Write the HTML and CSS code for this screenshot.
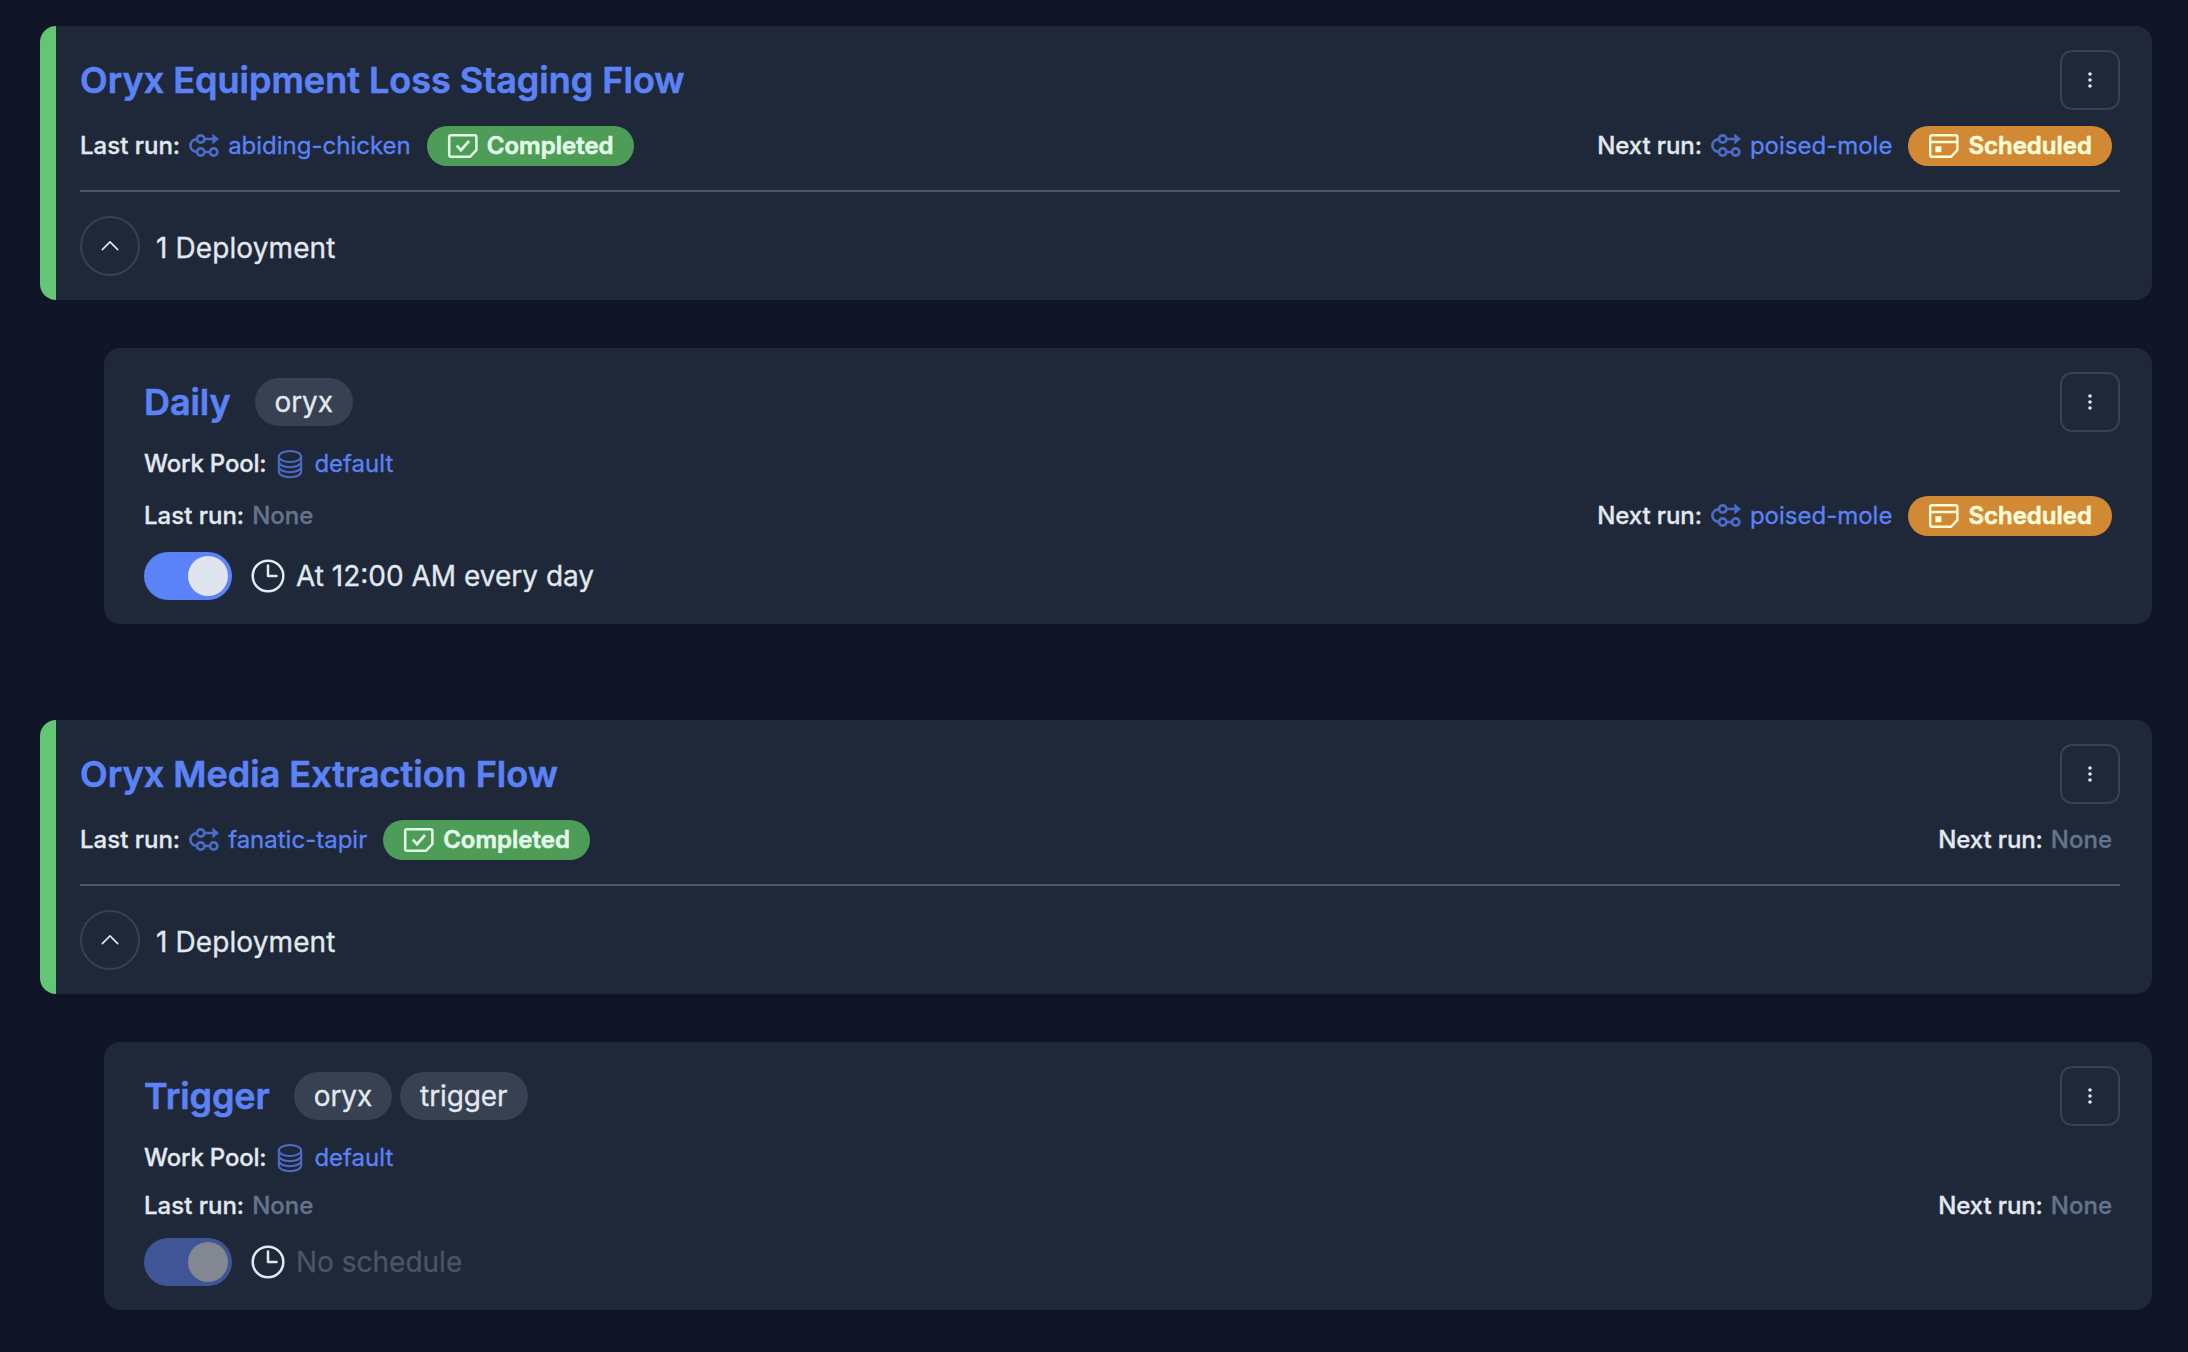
FILE: index.html
```html
<!DOCTYPE html>
<html lang="en">
<head>
<meta charset="utf-8">
<title>Deployments</title>
<link rel="stylesheet" href="styles.css">
</head>
<body>
<svg class="sprite" aria-hidden="true">
  <symbol id="flow-run" viewBox="0 0 32 32">
    <g fill="none" stroke="currentColor" stroke-width="2.7">
      <circle cx="12.7" cy="9" r="3.7"/><circle cx="12.7" cy="22" r="3.7"/><circle cx="25.7" cy="22" r="3.7"/>
      <path d="M9 9.2C0.2 9.8 0.2 21.4 9 22M16.400 9H26M16.400 22H22"/>
    </g>
    <path d="M24.400 3.400L31 9l-6.600 5.600z" fill="currentColor"/>
  </symbol>
  <symbol id="check" viewBox="0 0 32 32">
    <path d="M4 5.200H27.600Q29.400 5.200 29.400 7V20L23 26.800H4Q2.200 26.800 2.200 25V7Q2.200 5.200 4 5.200Z" fill="none" stroke="currentColor" stroke-width="2.500"/>
    <path d="M9.800 15.700L14 20.200L22 11" fill="none" stroke="currentColor" stroke-width="2.700"/>
  </symbol>
  <symbol id="calendar" viewBox="0 0 32 32">
    <path d="M4 5.200H27.600Q29.400 5.200 29.400 7V20L23 26.800H4Q2.200 26.800 2.200 25V7Q2.200 5.200 4 5.200ZM2.200 12H29.400" fill="none" stroke="currentColor" stroke-width="2.400"/>
    <path d="M7.400 16.200h6v6h-6z" fill="currentColor"/>
  </symbol>
  <symbol id="pool" viewBox="0 0 32 32">
    <g fill="none" stroke="currentColor" stroke-width="2">
      <ellipse cx="16" cy="8.500" rx="11.200" ry="5.500"/>
      <path d="M4.800 8.500V23.500C4.800 31 27.200 31 27.200 23.500V8.500M4.800 13.500C4.800 21 27.200 21 27.200 13.500M4.800 18.500C4.800 26 27.200 26 27.200 18.500"/>
    </g>
  </symbol>
  <symbol id="clock" viewBox="0 0 40 40">
    <path d="M20 9.500V20H28.500" fill="none" stroke="currentColor" stroke-width="2.500" stroke-linecap="round" stroke-linejoin="round"/>
    <circle cx="20" cy="20" r="15.300" fill="none" stroke="currentColor" stroke-width="2.500"/>
  </symbol>
  <symbol id="dots" viewBox="0 0 20 20">
    <g fill="currentColor"><circle cx="10" cy="4" r="1.800"/><circle cx="10" cy="10" r="1.800"/><circle cx="10" cy="16" r="1.800"/></g>
  </symbol>
  <symbol id="chevron" viewBox="0 0 20 20">
    <path d="M2.300 13.600L10 5.900L17.700 13.600" fill="none" stroke="currentColor" stroke-width="1.600" stroke-linecap="round" stroke-linejoin="round"/>
  </symbol>
</svg>
<main class="list">
  <section class="group">
    <article class="card card--flow">
      <header class="row"><h2 class="title">Oryx Equipment Loss Staging Flow</h2><button class="menu"><svg><use href="#dots"/></svg></button></header>
      <div class="row runs">
        <div class="run"><span>Last run:</span><a class="link"><svg class="icon"><use href="#flow-run"/></svg>abiding-chicken</a><span class="badge badge--done"><svg><use href="#check"/></svg>Completed</span></div>
        <div class="run run--next"><span>Next run:</span><a class="link"><svg class="icon"><use href="#flow-run"/></svg>poised-mole</a><span class="badge badge--scheduled"><svg><use href="#calendar"/></svg>Scheduled</span></div>
      </div>
      <hr class="divider">
      <div class="deployments"><button class="toggle-list"><svg><use href="#chevron"/></svg></button><span class="count">1 Deployment</span></div>
    </article>
    <article class="card card--deployment">
      <header class="row"><div class="heading"><h2 class="title">Daily</h2><div class="tags"><span class="tag">oryx</span></div></div><button class="menu"><svg><use href="#dots"/></svg></button></header>
      <div class="run pool"><span>Work Pool:</span><a class="link"><svg class="icon"><use href="#pool"/></svg>default</a></div>
      <div class="row runs">
        <div class="run"><span>Last run:</span><span class="none">None</span></div>
        <div class="run run--next"><span>Next run:</span><a class="link"><svg class="icon"><use href="#flow-run"/></svg>poised-mole</a><span class="badge badge--scheduled"><svg><use href="#calendar"/></svg>Scheduled</span></div>
      </div>
      <div class="schedule"><span class="switch"></span><svg class="clock"><use href="#clock"/></svg><span>At 12:00 AM every day</span></div>
    </article>
  </section>
  <section class="group">
    <article class="card card--flow">
      <header class="row"><h2 class="title">Oryx Media Extraction Flow</h2><button class="menu"><svg><use href="#dots"/></svg></button></header>
      <div class="row runs">
        <div class="run"><span>Last run:</span><a class="link"><svg class="icon"><use href="#flow-run"/></svg>fanatic-tapir</a><span class="badge badge--done"><svg><use href="#check"/></svg>Completed</span></div>
        <div class="run run--next"><span>Next run:</span><span class="none">None</span></div>
      </div>
      <hr class="divider">
      <div class="deployments"><button class="toggle-list"><svg><use href="#chevron"/></svg></button><span class="count">1 Deployment</span></div>
    </article>
    <article class="card card--deployment">
      <header class="row"><div class="heading"><h2 class="title">Trigger</h2><div class="tags"><span class="tag">oryx</span><span class="tag">trigger</span></div></div><button class="menu"><svg><use href="#dots"/></svg></button></header>
      <div class="run pool"><span>Work Pool:</span><a class="link"><svg class="icon"><use href="#pool"/></svg>default</a></div>
      <div class="row runs">
        <div class="run"><span>Last run:</span><span class="none">None</span></div>
        <div class="run run--next"><span>Next run:</span><span class="none">None</span></div>
      </div>
      <div class="schedule"><span class="switch switch--disabled"></span><svg class="clock"><use href="#clock"/></svg><span class="no-schedule">No schedule</span></div>
    </article>
  </section>
</main>
</body>
</html>
```

FILE: styles.css
```css
* { box-sizing: border-box; }
body {
  margin: 0;
  min-height: 1352px;
  background: #101628;
  color: #e2e8f0;
  font-family: Inter, "Liberation Sans", sans-serif;
  font-size: 28px;
  line-height: 40px;
  -webkit-text-stroke: 0.3px currentColor;
}
svg { display: block; flex: none; }
.sprite { position: absolute; width: 0; height: 0; }
.list { display: flex; flex-direction: column; gap: 96px; padding: 26px 36px 0 40px; }
.group { display: flex; flex-direction: column; gap: 48px; }
.card {
  display: flex;
  flex-direction: column;
  gap: 16px;
  padding: 24px 32px 24px 40px;
  border-radius: 16px;
  background: #1f2838;
  box-shadow: 0 2px 4px rgba(0, 0, 0, 0.08);
}
.card--flow { gap: 0; background: linear-gradient(to right, #63c674 16px, #1f2838 16px); }
.card--deployment { margin-left: 64px; }
.row { display: flex; align-items: center; justify-content: space-between; }
.card--flow .runs { margin-top: 16px; }
.runs { padding-right: 8px; }
.title { margin: 0; color: #5b82f7; font-size: 36px; font-weight: 600; line-height: 56px; -webkit-text-stroke-width: 0.6px; -webkit-text-stroke-color: #5b82f7; }
.heading { display: flex; align-items: center; gap: 24px; }
.heading .title { letter-spacing: -0.1px; }
.tags { display: flex; gap: 8px; }
.tag { height: 48px; padding: 0 20px; border-radius: 24px; background: #374151; line-height: 48px; letter-spacing: -0.1px; }
.menu, .toggle-list {
  display: flex;
  align-items: center;
  justify-content: center;
  width: 60px;
  height: 60px;
  padding: 0;
  border: 2px solid #374151;
  border-radius: 12px;
  background: none;
  color: #e2e8f0;
}
.menu svg { width: 20px; height: 20px; }
.toggle-list { border-radius: 50%; }
.toggle-list svg { width: 20px; height: 20px; }
.count { padding-top: 3px; letter-spacing: 0.1px; }
.run { display: flex; align-items: center; gap: 8px; font-size: 24px; font-weight: 500; line-height: 32px; }
.run--next > span:first-child { letter-spacing: -0.1px; }
.pool > span:first-child { letter-spacing: -0.2px; }
.link { display: flex; align-items: center; gap: 8px; color: #5b82f7; font-weight: 400; -webkit-text-stroke-color: #5b82f7; }
.icon { width: 32px; height: 32px; opacity: 0.75; }
.none { color: #64748b; -webkit-text-stroke-color: #64748b; }
.badge {
  display: flex;
  align-items: center;
  gap: 8px;
  height: 40px;
  margin-left: 8px;
  padding: 0 20px;
  border-radius: 20px;
  font-weight: 600;
  -webkit-text-stroke-width: 0.6px;
}
.badge svg { width: 32px; height: 32px; }
.badge--done { background: #4d9c57; color: #e2fbe8; -webkit-text-stroke-color: #e2fbe8; }
.badge--scheduled { background: #d18a33; color: #fefbd8; -webkit-text-stroke-color: #fefbd8; }
.divider { width: 100%; height: 2px; margin: 24px 0; border: 0; background: #4b5563; }
.deployments { display: flex; align-items: center; gap: 16px; }
.schedule { display: flex; align-items: center; height: 48px; }
.clock { width: 40px; height: 40px; margin: 0 8px 0 16px; }
.switch { display: flex; justify-content: flex-end; width: 88px; height: 48px; padding: 4px; border-radius: 24px; background: #5b82f7; }
.switch::after { content: ""; width: 40px; height: 40px; border-radius: 50%; background: #e0e4ee; }
.switch--disabled { background: #3f5596; }
.switch--disabled::after { background: #828791; }
.no-schedule { color: #4b5563; -webkit-text-stroke-color: #4b5563; }
```
